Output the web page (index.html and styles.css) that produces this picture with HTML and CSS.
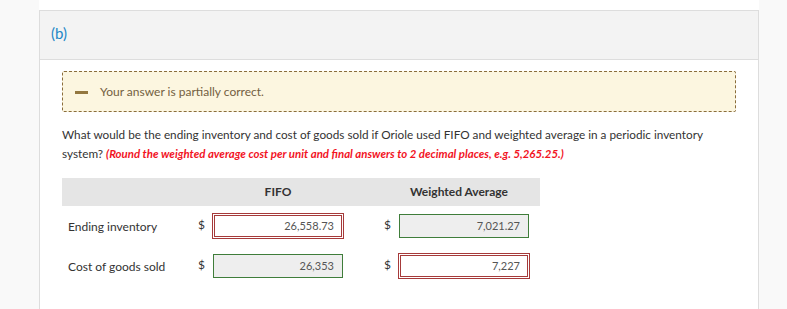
FILE: index.html
```html
<!DOCTYPE html>
<html>
<head>
    <link rel="stylesheet" href="styles.css">
</head>
<body>
    <div class="page">
        <div class="part">
            <div class="part-head">(b)</div>
            <div class="part-body">
                <div class="feedback">
                    <span class="minus"></span>
                    <span>Your answer is partially correct.</span>
                </div>
                <p class="question">What would be the ending inventory and cost of goods sold if Oriole used FIFO and weighted average in a periodic inventory system? <em class="hint">(Round the weighted average cost per unit and final answers to 2 decimal places, e.g. 5,265.25.)</em></p>
                <div class="answers">
                    <div class="th th-blank"></div>
                    <div class="th th-fifo">FIFO</div>
                    <div class="th th-avg">Weighted Average</div>

                    <div class="label">Ending inventory</div>
                    <div class="cur">$</div>
                    <div class="cell"><span class="field wrong">26,558.73</span></div>
                    <div class="cur">$</div>
                    <div class="cell"><span class="field right">7,021.27</span></div>
                    <div></div>

                    <div class="label">Cost of goods sold</div>
                    <div class="cur">$</div>
                    <div class="cell"><span class="field right">26,353</span></div>
                    <div class="cur">$</div>
                    <div class="cell"><span class="field wrong">7,227</span></div>
                    <div></div>
                </div>
            </div>
        </div>
    </div>
</body>
</html>
```

FILE: styles.css
```css
body {
    margin: 0; background: #f9f9f9;
    font-family: Lato, "Open Sans", sans-serif; color: #333;
}
.page {
    margin-left: 39px; width: 720px;
    background: #fff; padding-top: 10px; min-height: 299px;
}
.part { border: 1px solid #ddd; border-bottom: 0; min-height: 298px }
.part-head {
    height: 48px; line-height: 45px; padding-left: 11px;
    background: #f3f3f3; border-bottom: 1px solid #ddd;
    color: #1e88c7; font-size: 15px;
}
.part-body { padding: 11px 22px 0 22px }

.feedback {
    display: flex; align-items: center; gap: 12px;
    height: 39px; padding-left: 12px;
    background: #fcf6e0; border: 1px dashed #8a6d3b; border-radius: 2px;
    color: #73603f; font-size: 12px;
}
.minus { width: 13px; height: 3px; background: #93773f; margin-top: 1px }

.question {
    margin: 13px 0 0 0; font-size: 11.75px; line-height: 19px; color: #333;
}
.hint { color: #f2141f; font-weight: bold; font-size: 11.45px }

.answers {
    display: grid; margin-top: 15px; width: 478px;
    grid-template-columns: 130px 20px 132px 54px 132px 10px;
    grid-template-rows: 28px 40px 40px;
    align-items: center; font-size: 12px;
}
.th {
    background: #e5e5e5; height: 28px; line-height: 28px;
    font-weight: bold; font-size: 12px; text-align: center; color: #333;
}
.th-blank { grid-column: 1 / 3 }
.th-fifo { grid-column: 3 / 4 }
.th-avg { grid-column: 4 / 7; padding-left: 54px; padding-right: 20px }
.label { padding-left: 6px; color: #333 }
.cur { text-align: right; padding-right: 7px; padding-bottom: 3px }
.field {
    display: block; box-sizing: border-box;
    height: 24px; line-height: 22px; padding-right: 8px;
    text-align: right; font-size: 11px; color: #555;
}
.field.right { width: 130px; margin-left: 1px; background: #eee; border: 1px solid #3f7d3a }
.field.wrong {
    width: 132px; height: 26px; margin: -1px 0;
    line-height: 20px; padding-right: 7px;
    background: #fff; border: 3px double #a63a3a;
}
```
